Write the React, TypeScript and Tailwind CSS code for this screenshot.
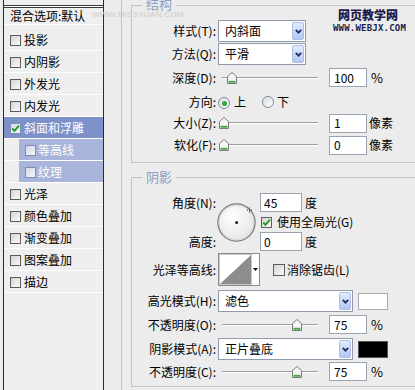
import React from "react";

const F = "font-['Noto_Sans_CJK_SC','Noto_Sans',sans-serif]";

function Box({ checked = false, size = "w-[11px] h-[11px]", tone = "normal" }: { checked?: boolean; size?: string; tone?: string }) {
  const look =
    tone === "sub"
      ? "border-[#7e8cb6] bg-linear-to-br from-[#d4d9e8] to-[#f4f6fb]"
      : "border-[#5c5c5c] bg-linear-to-br from-[#d3d3d3] to-[#fbfbfb]";
  return (
    <span className={`relative shrink-0 inline-block ${size} border ${look}`}>
      {checked && (
        <svg className="absolute left-0 top-0" width="9" height="9" viewBox="0 0 9 9">
          <path d="M1.2 4.5 L3.5 6.9 L7.9 1.7" stroke="#1e9a1e" strokeWidth="1.9" fill="none" />
        </svg>
      )}
    </span>
  );
}

function Label({ t }: { t: string }) {
  return <span className="w-[84px] shrink-0 text-right text-[12px] leading-none whitespace-nowrap">{t}</span>;
}

function Select({ value, w }: { value: string; w: string }) {
  return (
    <div className={`${w} ml-[2px] h-[22px] shrink-0 border border-[#8f9baa] bg-white flex items-center`}>
      <span className="flex-1 pl-[6px] text-[12px] leading-none">{value}</span>
      <span className="w-[12px] h-[18px] mr-[1px] rounded-[2px] border border-[#aebde6] bg-linear-to-b from-[#e3ebfd] to-[#b3c6f3] flex items-center justify-center">
        <svg width="7" height="5" viewBox="0 0 7 5">
          <path d="M0.8 0.8 L3.5 3.7 L6.2 0.8" stroke="#1f2d6b" strokeWidth="1.8" fill="none" />
        </svg>
      </span>
    </div>
  );
}

function Slider({ thumb }: { thumb: string }) {
  return (
    <div className="relative ml-[2px] w-[100px] h-[12px] shrink-0">
      <div className="absolute left-[4px] right-0 top-[5px] h-[2px] border-t border-[#9c9c9c] border-b border-b-white" />
      <svg className={`absolute top-0 ${thumb}`} width="10" height="12" viewBox="0 0 10 12">
        <path d="M0.5 4.5 L5 0.5 L9.5 4.5 L9.5 11.5 L0.5 11.5 Z" fill="#f7f7f7" stroke="#7c7c7c" strokeWidth="1" />
        <path d="M1.5 9.8 H8.5" stroke="#49a949" strokeWidth="2" />
      </svg>
    </div>
  );
}

function Field({ value, w = "w-[38px]", pl = "pl-[4px]", ml = "ml-[11px]" }: { value: string; w?: string; pl?: string; ml?: string }) {
  return (
    <div className={`${w} ${pl} ${ml} h-[19px] shrink-0 border border-[#9aa4b2] bg-white flex items-center text-[12px] leading-none`}>
      {value}
    </div>
  );
}

function Radio({ on = false }: { on?: boolean }) {
  return (
    <span className="shrink-0 inline-flex items-center justify-center w-[12px] h-[12px] rounded-full border border-[#7b8da3] bg-linear-to-br from-[#dcdcdc] to-white">
      {on && <span className="w-[5px] h-[5px] rounded-full bg-[#37a437]" />}
    </span>
  );
}

function ListRow({ label }: { label: string }) {
  return (
    <div className="h-[22px] border-b border-white flex items-center pl-[6px] pt-[1px]">
      <Box />
      <span className="ml-[3px] text-[12px] leading-none">{label}</span>
    </div>
  );
}

function SubRow({ label }: { label: string }) {
  return (
    <div className="h-[22px] border-b border-white flex">
      <div className="w-[15px] shrink-0" />
      <div className="flex-1 bg-[#a8b4da] flex items-center pl-[6px] pt-[1px] text-white">
        <Box tone="sub" />
        <span className="ml-[2px] text-[12px] leading-none">{label}</span>
      </div>
    </div>
  );
}

export default function App() {
  return (
    <div className={`relative w-[415px] h-[390px] overflow-hidden bg-[#ececec] text-black ${F}`}>
      <div className="flex h-full">
        <div className="w-[3px] shrink-0" />
        {/* Left list */}
        <div className="w-[101px] shrink-0 h-full border-x border-[#2b2b2b] bg-[#efefef] flex flex-col">
          <div className="h-[5px]" />
          <div className="h-[3px] border-y border-[#3a3a3a] bg-white" />
          <div className="h-[17px] border-b border-white flex items-center pl-[6px] text-[12px] leading-none">混合选项:默认</div>
          <div className="h-[4px]" />
          <ListRow label="投影" />
          <ListRow label="内阴影" />
          <ListRow label="外发光" />
          <ListRow label="内发光" />
          <div className="h-[22px] border-b border-white flex items-center pl-[6px] pt-[1px] bg-[#7c91c7] text-white">
            <Box checked tone="sub" />
            <span className="ml-[3px] text-[12px] leading-none">斜面和浮雕</span>
          </div>
          <SubRow label="等高线" />
          <SubRow label="纹理" />
          <ListRow label="光泽" />
          <ListRow label="颜色叠加" />
          <ListRow label="渐变叠加" />
          <ListRow label="图案叠加" />
          <ListRow label="描边" />
        </div>
        <div className="w-[17px] shrink-0" />
        {/* Right panel */}
        <div className="flex-1 h-full border-l border-[#c2c2c2] pl-[9px] overflow-hidden">
          {/* 结构 */}
          <div className="relative mt-[5px] h-[158px] w-[290px] border border-[#c4c4c4] pt-[14px]">
            <span className="absolute -top-[9px] left-[10px] px-[4px] bg-[#ececec] text-[13px] leading-[14px] text-[#8aa0c2]">结构</span>
            <div className="flex items-center h-[22px]">
              <Label t="样式(T):" />
              <Select value="内斜面" w="w-[88px]" />
            </div>
            <div className="flex items-center h-[22px] mt-[1px]">
              <Label t="方法(Q):" />
              <Select value="平滑" w="w-[88px]" />
            </div>
            <div className="flex items-center h-[21px] mt-[2px]">
              <Label t="深度(D):" />
              <Slider thumb="left-[9px]" />
              <Field value="100" />
              <span className="ml-[4px] text-[13px] leading-none">%</span>
            </div>
            <div className="flex items-center h-[20px] mt-[4px] text-[12px] leading-none">
              <Label t="方向:" />
              <span className="ml-[2px]"><Radio on /></span>
              <span className="ml-[4px]">上</span>
              <span className="ml-[16px]"><Radio /></span>
              <span className="ml-[3px]">下</span>
            </div>
            <div className="flex items-center h-[20px] mt-[1px]">
              <Label t="大小(Z):" />
              <Slider thumb="left-[1px]" />
              <Field value="1" />
              <span className="ml-[2px] text-[12px] leading-none">像素</span>
            </div>
            <div className="flex items-center h-[20px] mt-[2px]">
              <Label t="软化(F):" />
              <Slider thumb="left-[1px]" />
              <Field value="0" />
              <span className="ml-[2px] text-[12px] leading-none">像素</span>
            </div>
          </div>

          {/* 阴影 */}
          <div className="relative mt-[14px] h-[210px] w-[290px] border border-[#c4c4c4] pt-[15px]">
            <span className="absolute -top-[8px] left-[10px] px-[4px] bg-[#ececec] text-[13px] leading-[14px] text-[#8aa0c2]">阴影</span>
            <div className="flex">
              <div className="w-[84px] shrink-0 flex flex-col items-end text-[12px] leading-none">
                <div className="h-[19px] flex items-center">角度(N):</div>
                <div className="h-[19px] mt-[20px] flex items-center">高度:</div>
              </div>
              <div className="ml-[1px] pt-[10px] shrink-0">
                <svg width="40" height="40" viewBox="0 0 40 40">
                  <defs>
                    <radialGradient id="dg" cx="0.4" cy="0.35" r="0.75">
                      <stop offset="0" stopColor="#ffffff" />
                      <stop offset="1" stopColor="#e2e2e2" />
                    </radialGradient>
                  </defs>
                  <circle cx="19.5" cy="19.5" r="18.6" fill="url(#dg)" stroke="#777777" strokeWidth="1.2" />
                  <circle cx="19.5" cy="19.5" r="17.3" fill="none" stroke="#d4d4d4" strokeWidth="1" />
                  <rect x="18.4" y="18.4" width="2.4" height="2.4" fill="#000" />
                  <path d="M30 7 H35 M32.5 4.5 V9.5" stroke="#333" strokeWidth="1" strokeDasharray="1 1" />
                </svg>
              </div>
              <div className="ml-[3px] flex flex-col">
                <div className="flex items-center h-[19px]">
                  <Field value="45" w="w-[42px]" pl="pl-[3px]" ml="ml-0" />
                  <span className="ml-[3px] text-[12px] leading-none">度</span>
                </div>
                <div className="flex items-center h-[12px] mt-[4px]">
                  <span className="ml-[1px] flex"><Box checked /></span>
                  <span className="ml-[5px] text-[12px] leading-none whitespace-nowrap">使用全局光(G)</span>
                </div>
                <div className="flex items-center h-[19px] mt-[4px]">
                  <Field value="0" w="w-[42px]" pl="pl-[3px]" ml="ml-0" />
                  <span className="ml-[3px] text-[12px] leading-none">度</span>
                </div>
              </div>
            </div>
            <div className="flex items-center h-[33px] mt-[2px]">
              <Label t="光泽等高线:" />
              <div className="ml-[2px] w-[42px] h-[33px] shrink-0 border border-[#8a8a8a] bg-white flex">
                <div className="w-[33px] h-full border border-[#c8c8c8]">
                  <svg width="31" height="29" viewBox="0 0 31 29" className="block">
                    <polygon points="0,29 31,0 31,29" fill="#8d8d8d" />
                  </svg>
                </div>
                <div className="flex-1 flex items-center justify-center">
                  <svg width="5" height="3" viewBox="0 0 5 3">
                    <polygon points="0,0 5,0 2.5,3" fill="#111" />
                  </svg>
                </div>
              </div>
              <span className="ml-[13px] flex"><Box size="w-[12px] h-[12px]" /></span>
              <span className="ml-[2px] text-[12px] leading-none whitespace-nowrap">消除锯齿(L)</span>
            </div>
            <div className="flex items-center h-[22px] mt-[4px]">
              <Label t="高光模式(H):" />
              <Select value="滤色" w="w-[135px]" />
              <div className="ml-[5px] w-[30px] h-[17px] shrink-0 border border-[#a9a9a9] bg-white" />
            </div>
            <div className="flex items-center h-[19px] mt-[3px]">
              <Label t="不透明度(O):" />
              <Slider thumb="left-[74px]" />
              <Field value="75" />
              <span className="ml-[4px] text-[13px] leading-none">%</span>
            </div>
            <div className="flex items-center h-[22px] mt-[4px]">
              <Label t="阴影模式(A):" />
              <Select value="正片叠底" w="w-[135px]" />
              <div className="ml-[5px] w-[30px] h-[17px] shrink-0 border border-[#555] bg-black" />
            </div>
            <div className="flex items-center h-[19px] mt-[2px]">
              <Label t="不透明度(C):" />
              <Slider thumb="left-[74px]" />
              <Field value="75" />
              <span className="ml-[4px] text-[13px] leading-none">%</span>
            </div>
          </div>
        </div>
      </div>

      {/* watermarks */}
      <span className="absolute left-[92px] top-[11px] text-[8px] leading-none tracking-[0.3px] text-[#c9c9c9] font-['Liberation_Sans',sans-serif]">WWW.MISSYUAN.COM</span>
      <span className="absolute left-[338px] top-[8px] text-[12px] leading-[14px] font-black text-[#1c1c4e]">网页教学网</span>
      <span className="absolute left-[333px] top-[24px] text-[9px] leading-none font-bold tracking-[0.2px] text-[#1c1c4e] font-['DejaVu_Sans_Mono',monospace]">WWW.WEBJX.COM</span>
    </div>
  );
}
